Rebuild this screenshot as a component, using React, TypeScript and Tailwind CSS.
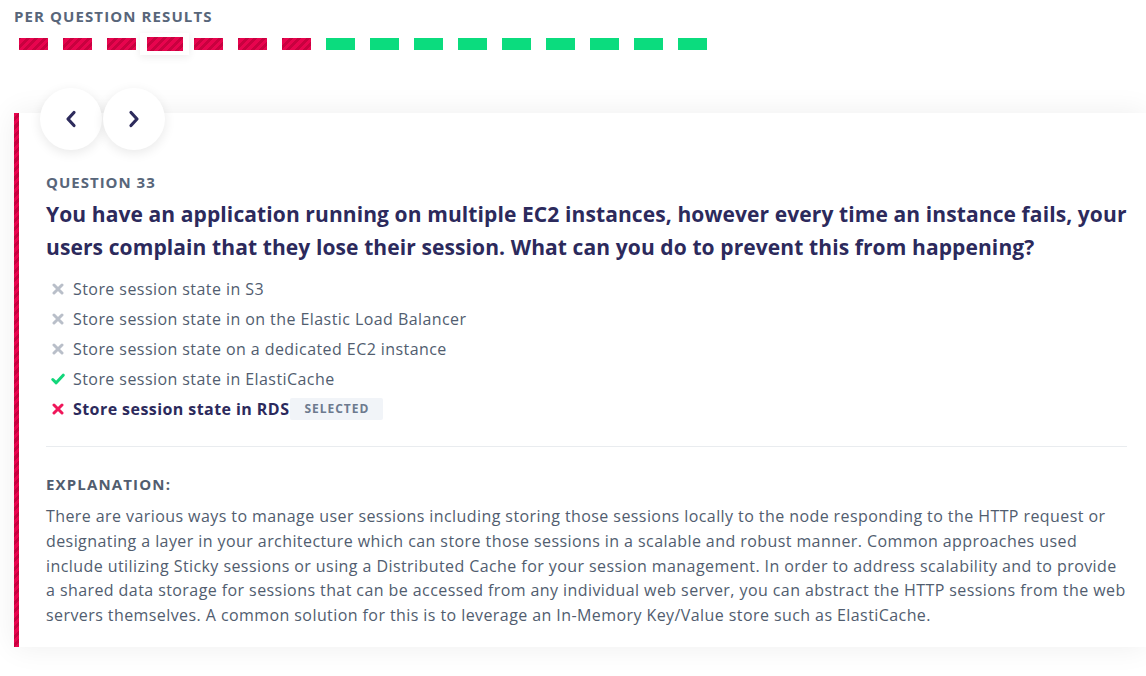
import React from 'react'

const hatch =
  'bg-[repeating-linear-gradient(-45deg,#e8044e_0px,#e8044e_3px,#c8013f_3px,#c8013f_6px)]'

const results = [
  'wrong', 'wrong', 'wrong', 'current', 'wrong', 'wrong', 'wrong',
  'right', 'right', 'right', 'right', 'right', 'right', 'right', 'right', 'right',
]

function Cross({ color }: { color: string }) {
  return (
    <svg width="12" height="12" viewBox="0 0 12 12" className="shrink-0">
      <path d="M2 2 L10 10 M10 2 L2 10" stroke={color} strokeWidth="3" strokeLinecap="round" />
    </svg>
  )
}

function Check() {
  return (
    <svg width="14" height="12" viewBox="0 0 14 12" className="shrink-0 -ml-[1px] -mr-[1px]">
      <path d="M1.8 6.5 L5.2 9.8 L12.2 2.2" stroke="#12d67a" strokeWidth="3" fill="none" strokeLinecap="round" strokeLinejoin="round" />
    </svg>
  )
}

function Chevron({ dir }: { dir: 'left' | 'right' }) {
  return (
    <svg width="14" height="20" viewBox="0 0 14 20">
      <polyline
        points={dir === 'left' ? '10,3.5 4,10 10,16.5' : '4,3.5 10,10 4,16.5'}
        fill="none"
        stroke="#2d2b5c"
        strokeWidth="3.2"
        strokeLinecap="round"
        strokeLinejoin="round"
      />
    </svg>
  )
}

const options = [
  { text: 'Store session state in S3', kind: 'no' },
  { text: 'Store session state in on the Elastic Load Balancer', kind: 'no' },
  { text: 'Store session state on a dedicated EC2 instance', kind: 'no' },
  { text: 'Store session state in ElastiCache', kind: 'ok' },
  { text: 'Store session state in RDS', kind: 'picked' },
]

export default function App() {
  return (
    <div className="min-h-[676px] bg-white font-['Open_Sans',sans-serif] overflow-hidden">
      <div className="pt-[6px] pl-[14px]">
        <div className="text-[15px] leading-[20px] font-bold uppercase tracking-[1.1px] text-[#58667a]">
          Per question results
        </div>
        <div className="mt-[7px] ml-[5px] flex h-[22px] items-center gap-[15px]">
          {results.map((r, i) =>
            r === 'current' ? (
              <div
                key={i}
                className="-ml-[11px] -mr-[10px] flex h-[22px] w-[49px] items-center justify-center bg-white shadow-[0_2px_8px_rgba(0,0,0,0.08)]"
              >
                <div className={`h-[14px] w-[36px] ${hatch}`} />
              </div>
            ) : (
              <div
                key={i}
                className={`h-[12px] w-[29px] ${r === 'wrong' ? hatch : 'bg-[#0bdc7e]'}`}
              />
            )
          )}
        </div>
      </div>

      <div className="ml-[14px] mt-[58px] flex bg-white shadow-[0_0_28px_rgba(0,0,0,0.07)]">
        <div className={`w-[5px] shrink-0 ${hatch}`} />
        <div className="flex-1 pl-[27px] pr-[19px] pb-[19px]">
          <div className="-ml-[6px] -mt-[25px] flex gap-[1px]">
            <button className="flex h-[62px] w-[62px] items-center justify-center rounded-full bg-white shadow-[0_3px_12px_rgba(0,0,0,0.09)]">
              <Chevron dir="left" />
            </button>
            <button className="flex h-[62px] w-[62px] items-center justify-center rounded-full bg-white shadow-[0_3px_12px_rgba(0,0,0,0.09)]">
              <Chevron dir="right" />
            </button>
          </div>

          <div className="mt-[22px] text-[15px] leading-[20px] font-bold uppercase tracking-[1px] text-[#58667a]">
            Question 33
          </div>
          <h2 className="mt-[6px] text-[21px] leading-[33px] font-bold tracking-[0.1px] text-[#2c2a5c]">
            You have an application running on multiple EC2 instances, however every time an instance fails, your
            users complain that they lose their session. What can you do to prevent this from happening?
          </h2>

          <ul className="mt-[10px]">
            {options.map((o) => (
              <li key={o.text} className="flex h-[30px] items-center pl-[6px]">
                {o.kind === 'no' && <Cross color="#b9bfc9" />}
                {o.kind === 'ok' && <Check />}
                {o.kind === 'picked' && <Cross color="#f0165a" />}
                <span
                  className={`ml-[9px] text-[16px] tracking-[0.43px] ${
                    o.kind === 'picked' ? 'font-bold text-[#2c2a5c]' : 'text-[#515d6f]'
                  }`}
                >
                  {o.text}
                </span>
                {o.kind === 'picked' && (
                  <span className="ml-[1px] flex h-[22px] items-center rounded-[2px] bg-[#f1f4f8] px-[14px] text-[12px] font-bold uppercase tracking-[1px] text-[#6d7a8e]">
                    Selected
                  </span>
                )}
              </li>
            ))}
          </ul>

          <div className="mt-[22px] h-px bg-[#e9ecef]" />

          <div className="mt-[27px] text-[15px] leading-[20px] font-bold uppercase tracking-[1.15px] text-[#515d6f]">
            Explanation:
          </div>
          <p className="mt-[10px] text-[16px] leading-[24.75px] tracking-[0.42px] text-[#515d6f]">
            There are various ways to manage user sessions including storing those sessions locally to the node
            responding to the HTTP request or designating a layer in your architecture which can store those sessions
            in a scalable and robust manner. Common approaches used include utilizing Sticky sessions or using a
            Distributed Cache for your session management. In order to address scalability and to provide a shared
            data storage for sessions that can be accessed from any individual web server, you can abstract the HTTP
            sessions from the web servers themselves. A common solution for this is to leverage an In-Memory Key/Value
            store such as ElastiCache.
          </p>
        </div>
      </div>
    </div>
  )
}
